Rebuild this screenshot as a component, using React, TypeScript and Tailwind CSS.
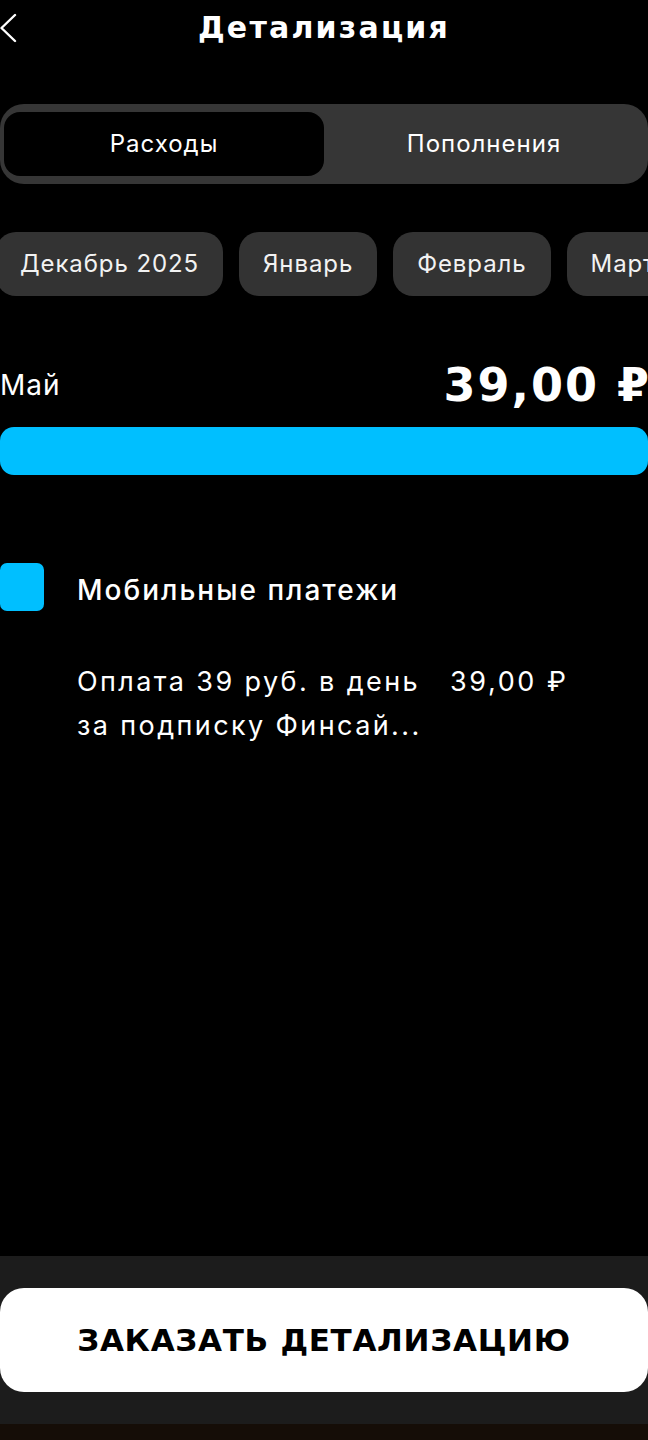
import React from "react";

const wide = { fontFamily: '"DejaVu Sans", "Liberation Sans", sans-serif' };

export default function App() {
  const months = ["Декабрь 2025", "Январь", "Февраль", "Март", "Апрель"];
  return (
    <div
      className="w-[648px] h-[1440px] bg-black text-white flex flex-col overflow-hidden"
      style={{ fontFamily: 'Inter, Roboto, "Noto Sans", sans-serif' }}
    >
      {/* header */}
      <div className="relative h-[56px] flex items-center justify-center">
        <svg
          className="absolute left-0 top-[13px]"
          width="18"
          height="30"
          viewBox="0 0 18 30"
          fill="none"
        >
          <path d="M15 2 L1.5 15 L15 28" stroke="white" strokeWidth="2.4" strokeLinecap="round" strokeLinejoin="round" />
        </svg>
        <h1 className="text-[30px] font-bold tracking-[2.2px] leading-none" style={wide}>
          Детализация
        </h1>
      </div>

      {/* segmented */}
      <div className="mt-[48px] h-[80px] rounded-[24px] bg-[#363636] p-[8px_4px] flex">
        <div className="flex-1 rounded-[16px] bg-black flex items-center justify-center text-[24px] tracking-[1px]">
          Расходы
        </div>
        <div className="flex-1 flex items-center justify-center text-[24px] tracking-[1px]">Пополнения</div>
      </div>

      {/* months */}
      <div className="mt-[48px] flex gap-[16px] -ml-[4px] overflow-hidden">
        {months.map((m) => (
          <div
            key={m}
            className="shrink-0 h-[64px] px-[24px] rounded-[20px] bg-[#333333] flex items-center text-[24px] tracking-[0.9px] text-[#f2f2f2]"
          >
            {m}
          </div>
        ))}
      </div>

      {/* month summary */}
      <div className="mt-[60px] flex items-center justify-between h-[58px]">
        <span className="text-[28px] tracking-[1px]">Май</span>
        <span className="text-[46px] font-bold leading-none tracking-[2px] -mr-[3px]" style={wide}>
          39,00 ₽
        </span>
      </div>
      <div className="mt-[13px] h-[48px] rounded-[14px] bg-[#00bfff]" />

      {/* category */}
      <div className="mt-[88px] flex items-center h-[48px]">
        <div className="w-[44px] h-[48px] rounded-[7px] bg-[#00bfff]" />
        <span className="ml-[33px] mt-[5px] text-[28px] font-medium tracking-[2px]">Мобильные платежи</span>
      </div>

      <div className="mt-[49px] ml-[77px] flex items-start">
        <div className="w-[373px] text-[27px] leading-[44px] tracking-[2.4px] whitespace-nowrap">
          Оплата 39 руб. в день
          <br />
          за подписку Финсай...
        </div>
        <div className="text-[27px] leading-[44px] tracking-[2.6px]">39,00 ₽</div>
      </div>

      <div className="flex-1" />

      {/* bottom */}
      <div className="h-[168px] bg-[#1c1c1c] pt-[32px]">
        <button
          className="w-full h-[104px] rounded-[24px] bg-white text-black flex items-center justify-center text-[31px] font-bold tracking-[0.7px]"
          style={wide}
        >
          ЗАКАЗАТЬ ДЕТАЛИЗАЦИЮ
        </button>
      </div>
      <div className="h-[16px] bg-[#150d07]" />
    </div>
  );
}
